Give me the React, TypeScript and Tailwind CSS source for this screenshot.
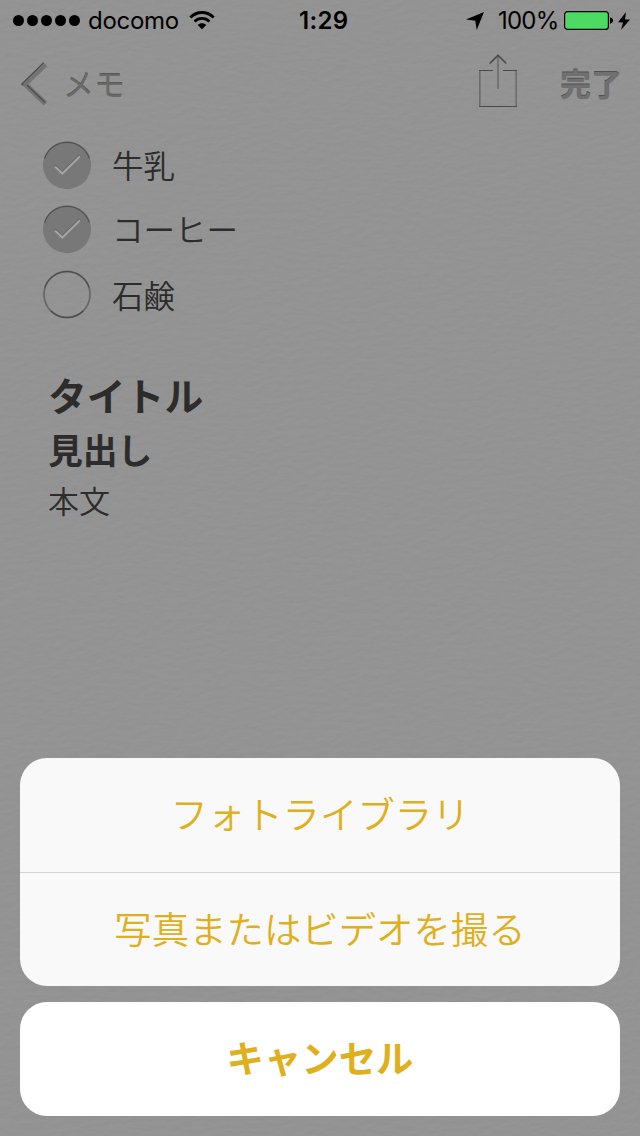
import type { ReactNode } from "react";

const jp = "font-['Noto_Sans_CJK_JP',sans-serif]";

function PaperTexture() {
  return (
    <svg className="absolute inset-0 h-full w-full" aria-hidden="true">
      <filter id="paper" x="0" y="0" width="100%" height="100%" colorInterpolationFilters="sRGB">
        <feTurbulence type="fractalNoise" baseFrequency="0.09 0.18" numOctaves="3" seed="8" result="noise" />
        <feDiffuseLighting in="noise" lightingColor="#ffffff" surfaceScale="0.1" diffuseConstant="0.666">
          <feDistantLight azimuth="250" elevation="60" />
        </feDiffuseLighting>
      </filter>
      <rect width="100%" height="100%" filter="url(#paper)" />
    </svg>
  );
}

function StatusBar() {
  return (
    <div className="flex h-10 items-center pl-[13px] pr-[10px] pt-px font-['Inter',sans-serif] text-2xl leading-10 text-black">
      <div className="flex w-[286px] items-center">
        <div className="flex gap-[3px]">
          {[0, 1, 2, 3, 4].map((n) => (
            <span key={n} className="size-[11px] rounded-full bg-black" />
          ))}
        </div>
        <span className="ml-[8px] w-[91px] tracking-[-0.3px]">docomo</span>
        <svg className="ml-[10px]" width="26" height="19" viewBox="0 0 26 19" fill="none" stroke="#000">
          <path d="M1.4 6.5C8-.1 18-.1 24.6 6.5" strokeWidth="3" />
          <path d="M5.5 10.4c4.2-4 10.8-4 15 0" strokeWidth="2.8" />
          <path d="M13 18.3 8.7 14c2.4-2.3 6.2-2.3 8.6 0Z" fill="#000" stroke="none" />
        </svg>
      </div>
      <span className="font-semibold tracking-[0.3px]">1:29</span>
      <div className="ml-auto flex items-center">
        <svg width="18" height="18" viewBox="0 0 18 18">
          <path d="M18 0 10.7 18 9.3 8.7 0 7.5Z" />
        </svg>
        <span className="ml-[14px] w-[61px] whitespace-nowrap tracking-[-0.8px]">100%</span>
        <svg className="ml-[5px]" width="50" height="19" viewBox="0 0 50 19">
          <rect x="0.6" y="0.6" width="43.8" height="17.8" rx="3" fill="#4cd964" stroke="#000" strokeWidth="1.2" />
          <path d="M46 6.3c2 .3 3 1.5 3 3.2s-1 2.9-3 3.2Z" />
        </svg>
        <svg className="ml-[4px]" width="12" height="18" viewBox="0 0 12 18">
          <path d="M8 0 0 10.2l5 .2L3 18 12 7.6l-5-.2Z" />
        </svg>
      </div>
    </div>
  );
}

function NavBar() {
  return (
    <div className="flex h-[88px] items-center pl-[21px] pr-[18px]">
      <svg width="28" height="44" viewBox="0 0 28 44" fill="none">
        <path d="M24.5 2.3 4 22l20.5 19.7" stroke="#737373" strokeWidth="5.2" />
        <path d="M22.6.7.8 22l1.4 1.4M24 40.3 5.9 23" stroke="#4a4a4a" strokeWidth="1.1" />
      </svg>
      <span className={`${jp} -mt-[3px] ml-[14px] text-[31px] font-[350] leading-[44px] text-[#6a6a6a] [text-shadow:0_-1px_0_#585858]`}>メモ</span>
      <svg className="-mt-[7px] ml-auto" width="40" height="54" viewBox="0 0 40 54" fill="none" strokeWidth="1.6">
        <path d="M1.8 16v36M38.2 16v36M20 2v33M11.5 10 20 1.6l8.5 8.4" stroke="#6c6c6c" />
        <path d="M1 16.5h14M25 16.5h14M1 52.5h38M12 9l8-7.8L28 9" stroke="#4b4b4b" strokeWidth="1.2" />
      </svg>
      <span className={`${jp} -mt-[3px] ml-[42px] text-[31px] font-bold leading-[44px] text-[#707070] [text-shadow:0_-1px_0_#505050]`}>完了</span>
    </div>
  );
}

function CheckItem({ done, children }: { done?: boolean; children: ReactNode }) {
  return (
    <div className="flex h-16 items-center">
      <svg width="50" height="50" viewBox="0 0 50 50" fill="none">
        {done ? (
          <>
            <circle cx="25" cy="25.2" r="24" fill="#787878" />
            <path d="M2.6 18.5A23.6 23.6 0 0 1 47.4 18.5" stroke="#525252" strokeWidth="1.1" />
            <path d="m13 25.5 7.3 7L38 15.3" stroke="#626262" strokeWidth="2.2" />
            <path d="m13 26.5 7.3 7L38 16.3" stroke="#a5a5a5" strokeWidth="2" />
          </>
        ) : (
          <>
            <circle cx="25" cy="24.5" r="23" stroke="#696969" strokeWidth="1.8" />
            <path d="M2.8 17.5A23.4 23.4 0 0 1 47.2 17.5M9 41a23 23 0 0 0 32 0" stroke="#4a4a4a" strokeWidth="1.1" />
          </>
        )}
      </svg>
      <span className="-mt-[3px] ml-5 text-[31.5px] leading-[46px]">{children}</span>
    </div>
  );
}

export default function App() {
  return (
    <div className="relative h-[1136px] w-[640px] overflow-hidden bg-[#939393]">
      <PaperTexture />
      <div className="relative flex h-full flex-col">
        <StatusBar />
        <NavBar />
        <main className={`${jp} font-[350] text-[#2c2c2c]`}>
          <div className="pl-[42px] pt-[5px]">
            <CheckItem done>牛乳</CheckItem>
            <CheckItem done>コーヒー</CheckItem>
            <div className="pt-[2px]">
              <CheckItem>石鹸</CheckItem>
            </div>
          </div>
          <div className="pl-[48px] pt-[38px]">
            <h1 className="text-[38.8px] font-bold leading-[58px]">タイトル</h1>
            <h2 className="text-[34.8px] font-bold leading-[52px]">見出し</h2>
            <p className="text-[31px] leading-[50px]">本文</p>
          </div>
        </main>
        <div className={`${jp} mt-auto flex flex-col gap-4 px-5 pb-5 text-[37.4px] text-[#dfaf1d]`}>
          <div className="overflow-hidden rounded-[27px] bg-[#f9f9f9]">
            <button className="block h-[114px] w-full pb-1 font-[350] leading-[110px]">フォトライブラリ</button>
            <button className="block h-[114px] w-full border-t border-[#d2d3d7] pb-[3px] font-[350] leading-[110px]">写真またはビデオを撮る</button>
          </div>
          <button className="h-[114px] rounded-[27px] bg-white pb-1 font-bold leading-[110px]">キャンセル</button>
        </div>
      </div>
    </div>
  );
}
